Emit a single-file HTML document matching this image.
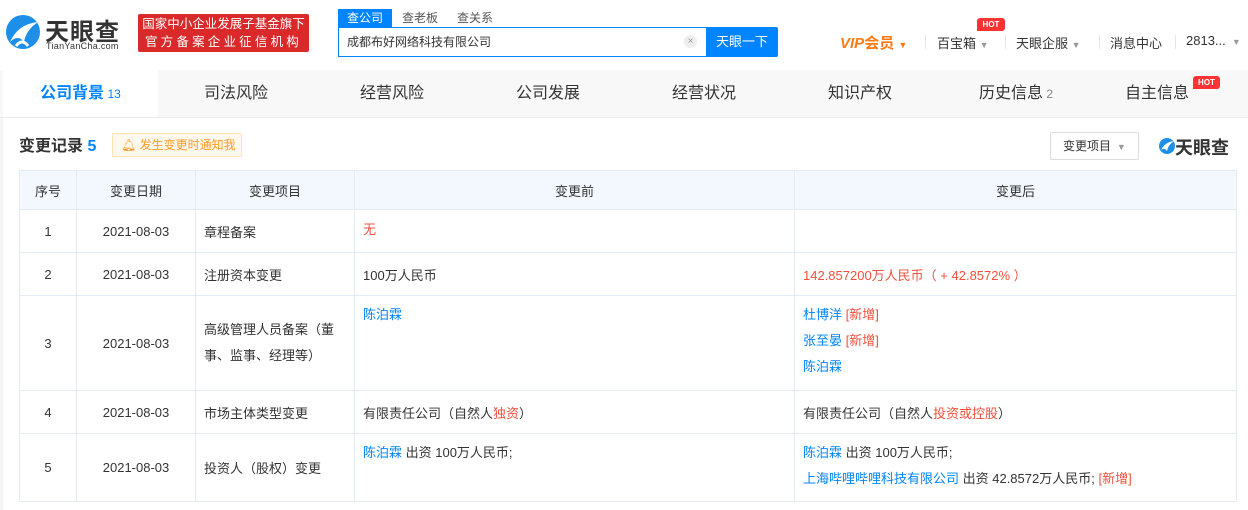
<!DOCTYPE html>
<html><head><meta charset="utf-8"><style>
*{margin:0;padding:0;box-sizing:border-box}
body{width:1248px;height:510px;overflow:hidden;background:#fff;font-family:"Liberation Sans","Noto Sans CJK SC",sans-serif;color:#333;position:relative}
.a{position:absolute;white-space:nowrap}
.hdr{position:absolute;left:0;top:0;width:1248px;height:70px;background:#fff;box-shadow:0 2px 4px rgba(0,0,0,.06)}
.tabs{position:absolute;left:0;top:70px;width:1248px;height:48px;background:#f8f8f8;border-bottom:1px solid #ececec}
.tab{position:absolute;top:0;height:47px;line-height:47px;font-size:16px;color:#333;text-align:center}
table{position:absolute;left:19px;top:170px;border-collapse:collapse;font-size:13px;color:#333}
td,th{border:1px solid #e3ecf5;vertical-align:top;padding:0 8px}
th{background:#f2f8fe;font-weight:normal;height:39px;vertical-align:middle;text-align:center}
td.c{text-align:center;vertical-align:middle}
td.m{vertical-align:middle}
.b{color:#0084ff}.r{color:#f0503c}
.l{line-height:26px}
</style></head><body>
<div class="hdr">
 <svg class="a" style="left:4px;top:12px" width="38" height="40" viewBox="0 0 38 40"><circle cx="19" cy="20" r="17" fill="#1d8fe8"/><path d="M6 30 Q14 12 34 10 Q22 18 20 30 Q14 22 6 30Z" fill="#fff"/><path d="M12 34 Q18 26 24 34" fill="none" stroke="#fff" stroke-width="3"/></svg>
 <div class="a" style="left:45px;top:12px;font-size:24px;font-weight:bold;color:#333;letter-spacing:1px">天眼查</div>
 <div class="a" style="left:46px;top:41px;font-size:9px;color:#333;letter-spacing:.3px">TianYanCha.com</div>
 <div class="a" style="left:138px;top:14px;width:171px;height:38px;background:#d9292b;border-radius:2px;color:#fff;font-size:12.5px;text-align:center;line-height:18px;padding-top:1px">国家中小企业发展子基金旗下<br><span style="letter-spacing:3.2px">官方备案企业征信机构</span></div>
 <div class="a" style="left:338px;top:9px;width:54px;height:18px;background:#0084ff;color:#fff;font-size:12px;text-align:center;line-height:18px">查公司</div>
 <div class="a" style="left:402px;top:9px;font-size:12px;color:#555;line-height:18px">查老板</div>
 <div class="a" style="left:457px;top:9px;font-size:12px;color:#555;line-height:18px">查关系</div>
 <div class="a" style="left:338px;top:27px;width:370px;height:30px;border:1px solid #0084ff;font-size:12px;line-height:28px;padding-left:8px;color:#333">成都布好网络科技有限公司</div>
 <div class="a" style="left:684px;top:35px;width:13px;height:13px;border-radius:50%;background:#eee;color:#999;font-size:10px;text-align:center;line-height:13px">×</div>
 <div class="a" style="left:706px;top:27px;width:72px;height:30px;background:#0084ff;color:#fff;font-size:13px;text-align:center;line-height:30px;border-radius:0 2px 2px 0">天眼一下</div>
 <div class="a" style="left:840px;top:32px;font-size:15px;font-weight:bold;color:#ff7a15;font-style:italic">VIP<span style="font-style:normal">会员</span> <span style="font-size:9px">▼</span></div>
 <div class="a" style="left:925px;top:35px;width:1px;height:14px;background:#e5e5e5"></div>
 <div class="a" style="left:937px;top:33px;font-size:13px;color:#333">百宝箱 <span style="font-size:9px;color:#999">▼</span></div>
 <div class="a" style="left:977px;top:18px;width:28px;height:13px;background:#f33;color:#fff;font-size:8px;font-weight:bold;text-align:center;line-height:13px;border-radius:3px 3px 3px 0">HOT</div>
 <div class="a" style="left:1005px;top:35px;width:1px;height:14px;background:#e5e5e5"></div>
 <div class="a" style="left:1016px;top:33px;font-size:13px;color:#333">天眼企服 <span style="font-size:9px;color:#999">▼</span></div>
 <div class="a" style="left:1099px;top:35px;width:1px;height:14px;background:#e5e5e5"></div>
 <div class="a" style="left:1110px;top:33px;font-size:13px;color:#333">消息中心</div>
 <div class="a" style="left:1175px;top:35px;width:1px;height:14px;background:#e5e5e5"></div>
 <div class="a" style="left:1186px;top:33px;font-size:13px;color:#333">2813... <span style="font-size:9px;color:#999">&nbsp;▼</span></div>
</div>
<div class="tabs">
 <div class="tab" style="left:3px;width:155px;background:#fff;color:#0084ff;font-weight:bold">公司背景<span style="font-size:12px;font-weight:normal"> 13</span></div>
 <div class="tab" style="left:158px;width:156px">司法风险</div>
 <div class="tab" style="left:314px;width:156px">经营风险</div>
 <div class="tab" style="left:470px;width:156px">公司发展</div>
 <div class="tab" style="left:626px;width:156px">经营状况</div>
 <div class="tab" style="left:782px;width:156px">知识产权</div>
 <div class="tab" style="left:938px;width:156px">历史信息<span style="font-size:12px;color:#888"> 2</span></div>
 <div class="tab" style="left:1094px;width:126px">自主信息</div>
 <div class="a" style="left:1193px;top:6px;width:27px;height:13px;background:#f33;color:#fff;font-size:8px;font-weight:bold;text-align:center;line-height:13px;border-radius:3px 3px 3px 0">HOT</div>
</div>
<div class="a" style="left:0;top:118px;width:3px;height:392px;background:#f5f5f5"></div>
<div class="a" style="left:19px;top:132px;font-size:16px;font-weight:bold;color:#333">变更记录 <span class="b">5</span></div>
<div class="a" style="left:112px;top:133px;width:130px;height:24px;border:1px solid #ffe2b5;background:#fff8ec;border-radius:2px;color:#ff9b26;font-size:12px;line-height:22px;padding-left:8px">🔔︎ 发生变更时通知我</div>
<div class="a" style="left:1050px;top:132px;width:89px;height:28px;border:1px solid #ddd;border-radius:2px;font-size:12px;line-height:26px;padding-left:12px;color:#333">变更项目 <span style="font-size:9px;color:#999">&nbsp;▼</span></div>
<svg class="a" style="left:1158px;top:137px" width="18" height="18" viewBox="0 0 18 18"><circle cx="9" cy="9" r="8" fill="#1d8fe8"/><path d="M3 13 Q7 5 16 4 Q10 8 9 14 Q6 10 3 13Z" fill="#fff"/></svg>
<div class="a" style="left:1175px;top:134px;font-size:18px;font-weight:bold;color:#333">天眼查</div>
<table>
<tr><th style="width:57px">序号</th><th style="width:119px">变更日期</th><th style="width:159px">变更项目</th><th style="width:440px">变更前</th><th style="width:442px">变更后</th></tr>
<tr style="height:43px"><td class="c">1</td><td class="c">2021-08-03</td><td class="m">章程备案</td><td class="l" style="padding-top:7px"><span class="r">无</span></td><td></td></tr>
<tr style="height:43px"><td class="c">2</td><td class="c">2021-08-03</td><td class="m">注册资本变更</td><td class="m">100万人民币</td><td class="m r">142.857200万人民币（ + 42.8572% ）</td></tr>
<tr style="height:95px"><td class="c">3</td><td class="c">2021-08-03</td><td class="m l">高级管理人员备案（董事、监事、经理等）</td><td class="l b" style="padding-top:6px">陈泊霖</td><td class="l" style="padding-top:6px"><span class="b">杜博洋</span> <span class="r">[新增]</span><br><span class="b">张至晏</span> <span class="r">[新增]</span><br><span class="b">陈泊霖</span></td></tr>
<tr style="height:43px"><td class="c">4</td><td class="c">2021-08-03</td><td class="m">市场主体类型变更</td><td class="m">有限责任公司（自然人<span class="r">独资</span>）</td><td class="m">有限责任公司（自然人<span class="r">投资或控股</span>）</td></tr>
<tr style="height:68px"><td class="c">5</td><td class="c">2021-08-03</td><td class="m">投资人（股权）变更</td><td class="l" style="padding-top:6px"><span class="b">陈泊霖</span> 出资 100万人民币;</td><td class="l" style="padding-top:6px"><span class="b">陈泊霖</span> 出资 100万人民币;<br><span class="b">上海哔哩哔哩科技有限公司</span> 出资 42.8572万人民币; <span class="r">[新增]</span></td></tr>
</table>
</body></html>
